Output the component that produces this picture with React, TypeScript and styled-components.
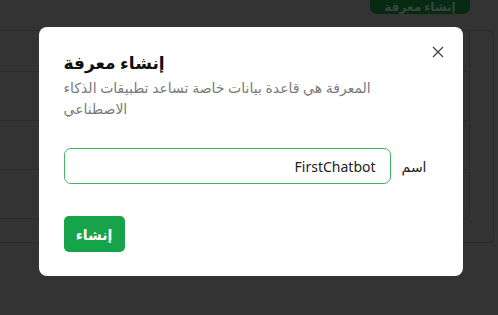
import React from 'react'
import styled, { createGlobalStyle } from 'styled-components'

const GlobalStyle = createGlobalStyle`
    html, body {
        margin: 0;
        padding: 0;
        background: #333333;
        font-family: 'Noto Sans', 'DejaVu Sans', sans-serif;
    }
`

const Page = styled.div`
    width: 498px;
    height: 315px;
    overflow: hidden;
    display: flex;
    flex-direction: column;
`

const TopBar = styled.div`
    display: flex;
    justify-content: flex-end;
    padding-right: 28px;
    height: 30px;
`

const CutButton = styled.div`
    width: 100px;
    height: 14px;
    background: #062b12;
    border-radius: 0 0 7px 7px;
    color: #3a463d;
    font-size: 12px;
    font-weight: 700;
    display: flex;
    align-items: flex-end;
    justify-content: center;
    line-height: 13px;
    padding-bottom: 1px;
    box-sizing: border-box;
    overflow: hidden;
`

const TableCard = styled.div`
    width: 494px;
    height: 213px;
    border: 1px solid #2b2b2b;
    border-left: none;
    border-radius: 0 6px 6px 0;
    box-sizing: border-box;
`

const TableInner = styled.div`
    width: 469px;
    height: 188px;
    border-right: 1px solid #2b2b2b;
    border-radius: 0 0 6px 0;
`

const TableRow = styled.div<{ $h: number }>`
    height: ${({ $h }) => $h}px;
    border-bottom: 1px solid #2b2b2b;
    box-sizing: border-box;
`

const Overlay = styled.div`
    position: fixed;
    inset: 0;
    display: flex;
    justify-content: center;
    align-items: flex-start;
    padding: 27px 0 0 3px;
`

const Modal = styled.div`
    position: relative;
    width: 424px;
    height: 249px;
    box-sizing: border-box;
    background: #ffffff;
    border-radius: 8px;
    padding: 24px 25px;
    display: flex;
    flex-direction: column;
`

const CloseButton = styled.button`
    position: absolute;
    top: 16px;
    right: 16px;
    width: 18px;
    height: 18px;
    padding: 0;
    border: none;
    background: none;
    display: flex;
    align-items: center;
    justify-content: center;
`

const Title = styled.h2`
    margin: 0;
    font-size: 17px;
    font-weight: 700;
    color: #111111;
    line-height: 24px;
`

const Description = styled.p`
    margin: 2px 0 0 0;
    width: 310px;
    font-size: 14px;
    line-height: 21px;
    color: #7a7a7a;
`

const FieldRow = styled.div`
    display: flex;
    flex-direction: row-reverse;
    align-items: center;
    gap: 11px;
    margin-top: 29px;
    padding-right: 11px;
`

const Label = styled.label`
    font-size: 14px;
    color: #222222;
`

const TextInput = styled.input`
    flex: 1;
    height: 36px;
    box-sizing: border-box;
    border: 1px solid #3fb563;
    border-radius: 7px;
    padding: 0 14px;
    font-family: 'Noto Sans', 'DejaVu Sans', sans-serif;
    font-size: 14px;
    color: #222222;
    text-align: right;
    outline: none;
`

const Actions = styled.div`
    display: flex;
    margin-top: 32px;
`

const PrimaryButton = styled.button`
    width: 61px;
    height: 36px;
    border: none;
    border-radius: 5px;
    background: #16a34a;
    color: #ffffff;
    font-family: 'Noto Sans', 'DejaVu Sans', sans-serif;
    font-size: 14px;
    font-weight: 700;
`

const App = () => {
    return (
        <>
            <GlobalStyle />
            <Page>
                <TopBar>
                    <CutButton>إنشاء معرفة</CutButton>
                </TopBar>
                <TableCard>
                    <TableInner>
                        <TableRow $h={41} />
                        <TableRow $h={49} />
                        <TableRow $h={49} />
                        <TableRow $h={49} />
                    </TableInner>
                </TableCard>
            </Page>
            <Overlay>
                <Modal>
                    <CloseButton aria-label="close">
                        <svg width="12" height="12" viewBox="0 0 12 12">
                            <path d="M1 1 L11 11 M11 1 L1 11" stroke="#444" strokeWidth="1.3" />
                        </svg>
                    </CloseButton>
                    <Title>إنشاء معرفة</Title>
                    <Description>المعرفة هي قاعدة بيانات خاصة تساعد تطبيقات الذكاء الاصطناعي</Description>
                    <FieldRow>
                        <Label>اسم</Label>
                        <TextInput defaultValue="FirstChatbot" />
                    </FieldRow>
                    <Actions>
                        <PrimaryButton>إنشاء</PrimaryButton>
                    </Actions>
                </Modal>
            </Overlay>
        </>
    )
}

export default App
